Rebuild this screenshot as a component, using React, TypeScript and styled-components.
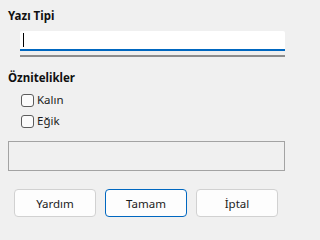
import styled, { createGlobalStyle } from 'styled-components';

const GlobalStyle = createGlobalStyle`
  html, body {
    margin: 0;
    padding: 0;
    background: #f0f0f0;
  }
  body {
    font-family: "Noto Sans", "Open Sans", "Liberation Sans", sans-serif;
    color: #1b1b1b;
  }
`;

const Dialog = styled.div`
  width: 293px;
  height: 231px;
  box-sizing: border-box;
  padding: 8px 8px 0 8px;
  display: flex;
  flex-direction: column;
`;

const SectionTitle = styled.div<{ $top?: number }>`
  font-size: 11.5px;
  font-weight: 700;
  line-height: 16px;
  margin-top: ${p => p.$top ?? 0}px;
  color: #111;
`;

const FieldWrap = styled.div`
  margin: 7px 0 0 12px;
  width: 265px;
  display: flex;
  flex-direction: column;
`;

const TextBox = styled.div`
  height: 18px;
  background: #ffffff;
  border-bottom: 2px solid #0067c0;
  border-radius: 2px 2px 0 0;
  display: flex;
  align-items: center;
  padding-left: 3px;
`;

const Caret = styled.span`
  width: 1px;
  height: 14px;
  background: #000;
`;

const Underline = styled.div`
  margin-top: 4px;
  height: 2px;
  background: #8c8c8c;
`;

const CheckList = styled.div`
  margin: 6px 0 0 13px;
  display: flex;
  flex-direction: column;
  gap: 5px;
`;

const CheckRow = styled.label`
  display: flex;
  align-items: center;
  gap: 3px;
  height: 16px;
  font-size: 11.5px;
  line-height: 16px;
`;

const Box = styled.span`
  width: 11px;
  height: 11px;
  border: 1px solid #5c5c5c;
  border-radius: 3px;
  background: #fbfbfb;
`;

const Placeholder = styled.div`
  margin-top: 12px;
  width: 277px;
  height: 30px;
  box-sizing: border-box;
  border: 1px solid #a3a3a3;
`;

const ButtonBar = styled.div`
  margin: 18px 0 0 6px;
  display: flex;
  gap: 9px;
`;

const Button = styled.button<{ $primary?: boolean }>`
  width: 82px;
  height: 28px;
  box-sizing: border-box;
  background: #fdfdfd;
  border: 1px solid ${p => (p.$primary ? '#0067c0' : '#d1d1d1')};
  border-radius: 4px;
  font-family: inherit;
  font-size: 11.5px;
  color: #1b1b1b;
  padding: 0;
`;

export default function App() {
  return (
    <>
      <GlobalStyle />
      <Dialog>
        <SectionTitle>Yazı Tipi</SectionTitle>
        <FieldWrap>
          <TextBox>
            <Caret />
          </TextBox>
          <Underline />
        </FieldWrap>
        <SectionTitle $top={13}>Öznitelikler</SectionTitle>
        <CheckList>
          <CheckRow>
            <Box />
            Kalın
          </CheckRow>
          <CheckRow>
            <Box />
            Eğik
          </CheckRow>
        </CheckList>
        <Placeholder />
        <ButtonBar>
          <Button>Yardım</Button>
          <Button $primary>Tamam</Button>
          <Button>İptal</Button>
        </ButtonBar>
      </Dialog>
    </>
  );
}
